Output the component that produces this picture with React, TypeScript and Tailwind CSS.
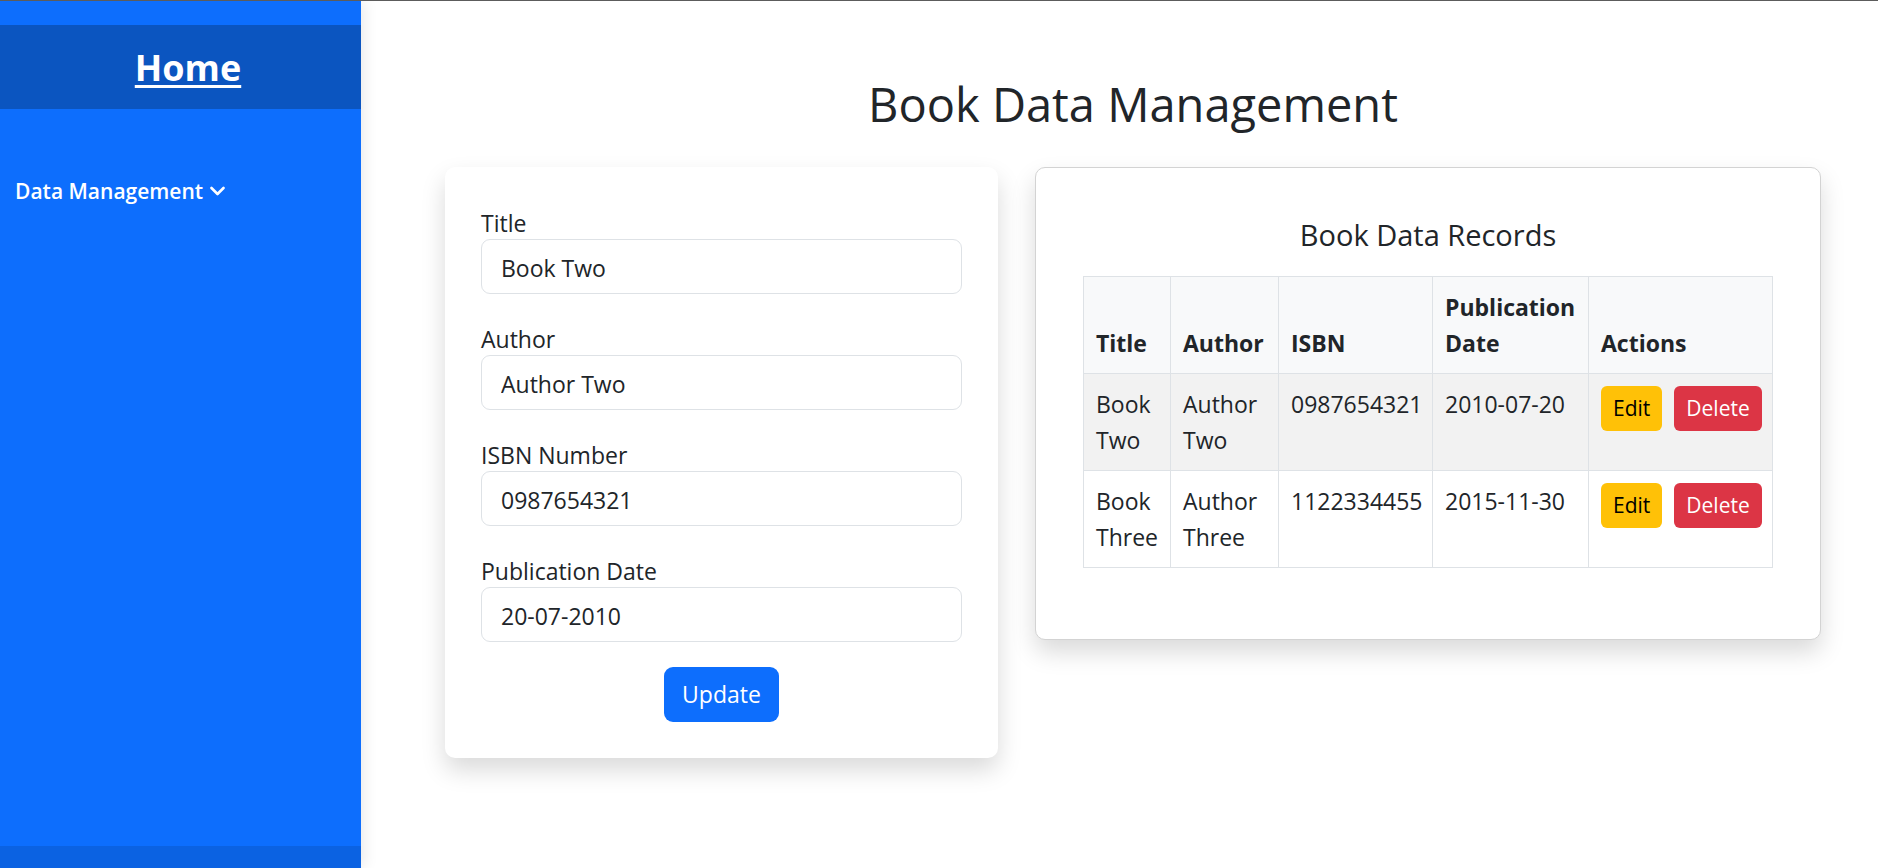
import { useState } from "react";

interface Book {
  title: string;
  author: string;
  isbn: string;
  date: string;
}

const books: Book[] = [
  { title: "Book Two", author: "Author Two", isbn: "0987654321", date: "2010-07-20" },
  { title: "Book Three", author: "Author Three", isbn: "1122334455", date: "2015-11-30" },
];

function Sidebar() {
  return (
    <aside className="w-[361px] shrink-0 bg-[#0d6efd] flex flex-col shadow-[3px_0_14px_rgba(0,0,0,0.09)] z-10">
      <div className="h-[24px]" />
      <div className="h-[84px] bg-[#0b55c0] flex items-center justify-center pl-[15px]">
        <a href="#" className="text-white text-[36px] font-bold underline decoration-[3px] underline-offset-[4px] leading-none mt-[2px]">
          Home
        </a>
      </div>
      <nav className="pt-[65px] px-[15px]">
        <button className="flex items-center gap-[7px] text-white text-[21px] font-semibold leading-[34px]">
          Data Management
          <svg width="15" height="10" viewBox="0 0 15 10" fill="none">
            <path d="M1.5 2 L7.5 8 L13.5 2" stroke="white" strokeWidth="2.6" strokeLinecap="round" strokeLinejoin="round" />
          </svg>
        </button>
      </nav>
      <div className="flex-1" />
      <div className="h-[22px] bg-[#0b62e2]" />
    </aside>
  );
}

function Field({ label, value }: { label: string; value: string }) {
  return (
    <div className="mb-[25px]">
      <label className="block text-[23px] leading-[36px] pt-[2px] -mb-[2px] text-[#212529]">{label}</label>
      <input
        readOnly
        value={value}
        className="block w-full h-[55px] border border-[#dee2e6] rounded-[9px] px-[19px] pt-[2px] text-[23px] text-[#212529] bg-white outline-none"
      />
    </div>
  );
}

function BookForm() {
  const [form] = useState({
    title: "Book Two",
    author: "Author Two",
    isbn: "0987654321",
    date: "20-07-2010",
  });

  return (
    <div className="w-[553px] bg-white rounded-[10px] p-[36px] shadow-[0_12px_24px_rgba(0,0,0,0.15)]">
      <Field label="Title" value={form.title} />
      <Field label="Author" value={form.author} />
      <Field label="ISBN Number" value={form.isbn} />
      <Field label="Publication Date" value={form.date} />
      <div className="flex justify-center">
        <button className="h-[55px] px-[18px] rounded-[9px] bg-[#0d6efd] text-white text-[23px]">Update</button>
      </div>
    </div>
  );
}

function BookTable() {
  return (
    <div className="w-[786px] bg-white border border-[#d3d3d3] rounded-[10px] p-[47px] shadow-[0_12px_24px_rgba(0,0,0,0.15)]">
      <h3 className="text-center text-[29px] font-medium leading-[36px] pt-[2px] text-[#212529] mb-[23px]">Book Data Records</h3>
      <table className="w-full table-fixed border-collapse border border-[#dee2e6] text-[23px] text-[#212529] mb-[24px]">
        <colgroup>
          <col className="w-[87px]" />
          <col className="w-[108px]" />
          <col className="w-[154px]" />
          <col className="w-[156px]" />
          <col className="w-[184px]" />
        </colgroup>
        <thead className="bg-[#f8f9fa]">
          <tr>
            {["Title", "Author", "ISBN", "Publication Date", "Actions"].map((h) => (
              <th key={h} className="border border-[#dee2e6] p-[12px] text-left align-bottom font-bold leading-[36px]">
                {h}
              </th>
            ))}
          </tr>
        </thead>
        <tbody>
          {books.map((b, i) => (
            <tr key={b.isbn} className={i % 2 === 0 ? "bg-[#f2f2f2]" : "bg-white"}>
              <td className="border border-[#dee2e6] p-[12px] align-top leading-[36px]">{b.title}</td>
              <td className="border border-[#dee2e6] p-[12px] align-top leading-[36px]">{b.author}</td>
              <td className="border border-[#dee2e6] p-[12px] align-top leading-[36px]">{b.isbn}</td>
              <td className="border border-[#dee2e6] p-[12px] align-top leading-[36px]">{b.date}</td>
              <td className="border border-[#dee2e6] p-[12px] align-top">
                <div className="flex gap-[12px]">
                  <button className="h-[45px] px-[12px] rounded-[6px] bg-[#ffc107] text-black text-[21px]">Edit</button>
                  <button className="h-[45px] px-[12px] rounded-[6px] bg-[#dc3545] text-white text-[21px]">Delete</button>
                </div>
              </td>
            </tr>
          ))}
        </tbody>
      </table>
    </div>
  );
}

export default function App() {
  return (
    <div
      className="h-[868px] flex border-t border-[#5c5c5c] bg-white overflow-hidden"
      style={{ fontFamily: '"Open Sans", "Noto Sans", sans-serif' }}
    >
      <Sidebar />
      <main className="flex-1 pl-[27px]">
        <h1 className="text-center text-[47px] font-medium leading-[58px] text-[#212529] mt-[74px] mb-[34px]">Book Data Management</h1>
        <div className="flex justify-center items-start gap-[37px]">
          <BookForm />
          <BookTable />
        </div>
      </main>
    </div>
  );
}
